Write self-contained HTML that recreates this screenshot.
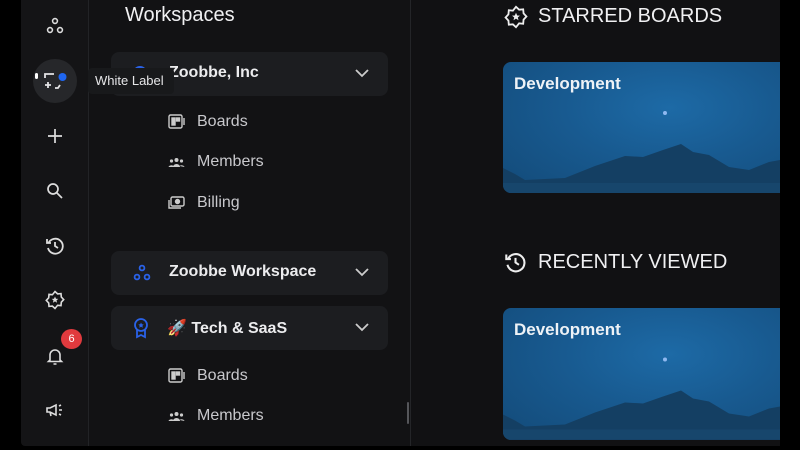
<!DOCTYPE html>
<html><head><meta charset="utf-8"><style>
*{margin:0;padding:0;box-sizing:border-box}
body{width:800px;height:450px;background:#000;overflow:hidden;font-family:"Liberation Sans",sans-serif;position:relative;color:#e8e8ea}
.side{position:absolute;left:21px;top:0;width:68px;height:446px;background:#141416;border-right:1px solid #222326;border-radius:0 0 0 4px}
.panel{position:absolute;left:89px;top:0;width:322px;height:446px;background:#121214;border-right:1px solid #242528}
.main{position:absolute;left:411px;top:0;width:369px;height:446px;background:#111113}
.ic{position:absolute;left:45px;width:20px;height:20px}
.ws{position:absolute;left:111px;width:277px;height:44px;background:#1c1d20;border-radius:8px}
.ws .t{position:absolute;left:58px;top:12px;font-size:16px;font-weight:bold;color:#ececee}
.ws svg.ch{position:absolute;right:18px;top:16px}
.sub{position:absolute;left:197px;font-size:16px;color:#c8c8cc}
.si{position:absolute;left:168px;width:17px;height:15px}
.h{position:absolute;left:538px;font-size:20px;color:#f0f0f2}
.card{position:absolute;left:503px;width:277px;height:131px;border-radius:8px 0 0 8px;overflow:hidden;background:radial-gradient(ellipse at 60% 35%,#1d6aa6 0%,#185a90 45%,#134a78 100%)}
.card .n{position:absolute;left:11px;top:12px;font-size:17px;font-weight:bold;color:#eef2f6}
.tip{position:absolute;left:88px;top:68px;width:86px;height:26px;background:#18191b;border-radius:4px;font-size:13px;line-height:26px;padding-left:7px;color:#e6e6e8;z-index:5}
</style></head><body>
<div class="side"></div><div class="panel"></div><div class="main"></div>

<svg class="ic" style="top:16px" viewBox="0 0 20 20" fill="none" stroke="#ddd" stroke-width="1.6"><circle cx="10" cy="5" r="2.4"/><circle cx="5" cy="14" r="2.4"/><circle cx="15" cy="14" r="2.4"/></svg>
<div style="position:absolute;left:33px;top:59px;width:44px;height:44px;border-radius:50%;background:#26272a"></div>
<svg style="position:absolute;left:44px;top:70px" width="24" height="24" viewBox="0 0 24 24" fill="none" stroke="#e4e4e6" stroke-width="1.8"><path d="M1 8V4h9M1 15h6M4 12v6M11 18h3l2-3"/><circle cx="18.5" cy="7" r="4" fill="#1f66f0" stroke="none"/></svg>
<div style="position:absolute;left:35px;top:73px;width:3px;height:6px;background:#fff;border-radius:2px"></div>
<svg class="ic" style="top:126px" viewBox="0 0 20 20" stroke="#ddd" stroke-width="1.7"><path d="M10 3v14M3 10h14"/></svg>
<svg class="ic" style="top:181px" viewBox="0 0 20 20" fill="none" stroke="#ddd" stroke-width="1.7"><circle cx="8" cy="8" r="5"/><path d="M12 12l5 5"/></svg>
<svg class="ic" style="top:236px" viewBox="0 0 20 20" fill="none" stroke="#ddd" stroke-width="1.8"><path d="M3.5 7A7.5 7.5 0 1 1 3 12"/><path d="M2 3v4h4"/><path d="M10 6v4l3 2"/></svg>
<svg class="ic" style="top:290px" viewBox="0 0 20 20" fill="none" stroke="#ddd" stroke-width="1.6"><path d="M10 1.5l2.6 2.4 3.4-.3.3 3.4 2.4 2.6-2.4 2.6-.3 3.4-3.4-.3L10 18.5l-2.6-2.4-3.4.3-.3-3.4L1.3 10.4 3.7 7.8 4 4.4l3.4.3z"/><path d="M10 6.5l1 2.2 2.3.2-1.8 1.5.6 2.3-2.1-1.3-2.1 1.3.6-2.3-1.8-1.5 2.3-.2z" fill="#ddd" stroke="none"/></svg>
<svg class="ic" style="top:346px" viewBox="0 0 20 20" fill="none" stroke="#ddd" stroke-width="1.6"><path d="M5 14V9a5 5 0 0 1 10 0v5l1.5 1.5h-13zM8.5 18h3"/></svg>
<div style="position:absolute;left:61px;top:329px;width:21px;height:20px;border-radius:50%;background:#e03a3e;color:#fff;font-size:11px;text-align:center;line-height:20px">6</div>
<svg class="ic" style="top:400px" viewBox="0 0 20 20" fill="none" stroke="#ddd" stroke-width="1.6"><path d="M2 8h3l6-3v10l-6-3H2zM5 12l1 4M14 10h3M14 6l2-1M14 14l2 1"/></svg>

<div style="position:absolute;left:125px;top:4px;font-size:20px;color:#f0f0f2">Workspaces</div>
<div style="position:absolute;left:407px;top:402px;width:2px;height:22px;background:#55565a;border-radius:1px"></div>

<div class="ws" style="top:52px"><svg style="position:absolute;left:20px;top:12px" width="18" height="10" viewBox="0 0 18 10" fill="none" stroke="#2a62e8" stroke-width="2"><path d="M3 9a6 6 0 0 1 12 0"/></svg><div class="t">Zoobbe, Inc</div><svg class="ch" width="16" height="10" viewBox="0 0 16 10" fill="none" stroke="#ccc" stroke-width="1.8"><path d="M2 2l6 6 6-6"/></svg></div>
<div class="tip">White Label</div>

<svg class="si" style="top:114px" viewBox="0 0 17 15" fill="none" stroke="#ccc" stroke-width="1.4"><rect x="1" y="1" width="13" height="13" rx="1.5"/><rect x="4" y="4" width="3" height="7" fill="#ccc"/><rect x="8.5" y="4" width="3" height="3" fill="#ccc"/><path d="M16 4v7"/></svg>
<div class="sub" style="top:113px">Boards</div>
<svg class="si" style="top:155px" viewBox="0 0 17 15" fill="#ccc"><circle cx="8.5" cy="5" r="2"/><circle cx="3.5" cy="6" r="1.6"/><circle cx="13.5" cy="6" r="1.6"/><path d="M5 12a3.5 3 0 0 1 7 0zM0.5 12a3 2.5 0 0 1 5-1v1zM11.5 11a3 2.5 0 0 1 5 1z"/></svg>
<div class="sub" style="top:153px">Members</div>
<svg class="si" style="top:195px" viewBox="0 0 17 15" fill="none" stroke="#ccc" stroke-width="1.4"><rect x="3" y="2" width="13" height="9" rx="1.5"/><circle cx="9.5" cy="6.5" r="2" fill="#ccc"/><path d="M1 5v8h12"/></svg>
<div class="sub" style="top:194px">Billing</div>

<div class="ws" style="top:251px"><svg style="position:absolute;left:21px;top:12px" width="20" height="20" viewBox="0 0 20 20" fill="none" stroke="#2a62e8" stroke-width="1.8"><circle cx="10" cy="5" r="2.4"/><circle cx="5" cy="14" r="2.4"/><circle cx="15" cy="14" r="2.4"/></svg><div class="t">Zoobbe Workspace</div><svg class="ch" width="16" height="10" viewBox="0 0 16 10" fill="none" stroke="#ccc" stroke-width="1.8"><path d="M2 2l6 6 6-6"/></svg></div>
<div class="ws" style="top:306px"><svg style="position:absolute;left:22px;top:11px" width="16" height="22" viewBox="0 0 16 22" fill="none" stroke="#2a62e8" stroke-width="1.8"><circle cx="8" cy="8" r="6"/><path d="M4 13v7l4-2 4 2v-7"/><path d="M8 5.5l.9 1.8 1.9.2-1.4 1.3.4 1.9L8 9.8l-1.7.9.4-1.9-1.4-1.3 1.9-.2z" fill="#2a62e8" stroke="none"/></svg><div class="t" style="left:56px">🚀 Tech &amp; SaaS</div><svg class="ch" width="16" height="10" viewBox="0 0 16 10" fill="none" stroke="#ccc" stroke-width="1.8"><path d="M2 2l6 6 6-6"/></svg></div>

<svg class="si" style="top:368px" viewBox="0 0 17 15" fill="none" stroke="#ccc" stroke-width="1.4"><rect x="1" y="1" width="13" height="13" rx="1.5"/><rect x="4" y="4" width="3" height="7" fill="#ccc"/><rect x="8.5" y="4" width="3" height="3" fill="#ccc"/><path d="M16 4v7"/></svg>
<div class="sub" style="top:367px">Boards</div>
<svg class="si" style="top:409px" viewBox="0 0 17 15" fill="#ccc"><circle cx="8.5" cy="5" r="2"/><circle cx="3.5" cy="6" r="1.6"/><circle cx="13.5" cy="6" r="1.6"/><path d="M5 12a3.5 3 0 0 1 7 0zM0.5 12a3 2.5 0 0 1 5-1v1zM11.5 11a3 2.5 0 0 1 5 1z"/></svg>
<div class="sub" style="top:407px">Members</div>

<svg style="position:absolute;left:504px;top:5px" width="24" height="24" viewBox="0 0 20 20" fill="none" stroke="#eee" stroke-width="1.5"><path d="M10 1.5l2.6 2.4 3.4-.3.3 3.4 2.4 2.6-2.4 2.6-.3 3.4-3.4-.3L10 18.5l-2.6-2.4-3.4.3-.3-3.4L1.3 10.4 3.7 7.8 4 4.4l3.4.3z"/><path d="M10 6.5l1 2.2 2.3.2-1.8 1.5.6 2.3-2.1-1.3-2.1 1.3.6-2.3-1.8-1.5 2.3-.2z" fill="#eee" stroke="none"/></svg>
<div class="h" style="top:5px">STARRED BOARDS</div>
<div class="card" style="top:62px"><div class="n">Development</div>
<svg style="position:absolute;left:0;top:0" width="277" height="131" viewBox="0 0 277 131"><circle cx="162" cy="51" r="2" fill="#8fb8f0"/><path d="M0 106l12 6 10 6 40-2 30-12 30-10 18 1 20-7 18-6 12 8 16 3 20 12 20 3 20-8 11-2v37H0z" fill="#143f63"/><path d="M0 121h277v10H0z" fill="#17466c"/></svg></div>

<svg style="position:absolute;left:504px;top:251px" width="23" height="23" viewBox="0 0 20 20" fill="none" stroke="#eee" stroke-width="1.8"><path d="M3.5 7A7.5 7.5 0 1 1 3 12"/><path d="M2 3v4h4"/><path d="M10 6v4l3 2"/></svg>
<div class="h" style="top:251px">RECENTLY VIEWED</div>
<div class="card" style="top:308px;height:132px"><div class="n">Development</div>
<svg style="position:absolute;left:0;top:0" width="277" height="132" viewBox="0 0 277 131"><circle cx="162" cy="51" r="2" fill="#8fb8f0"/><path d="M0 106l12 6 10 6 40-2 30-12 30-10 18 1 20-7 18-6 12 8 16 3 20 12 20 3 20-8 11-2v37H0z" fill="#143f63"/><path d="M0 121h277v10H0z" fill="#17466c"/></svg></div>
</body></html>
